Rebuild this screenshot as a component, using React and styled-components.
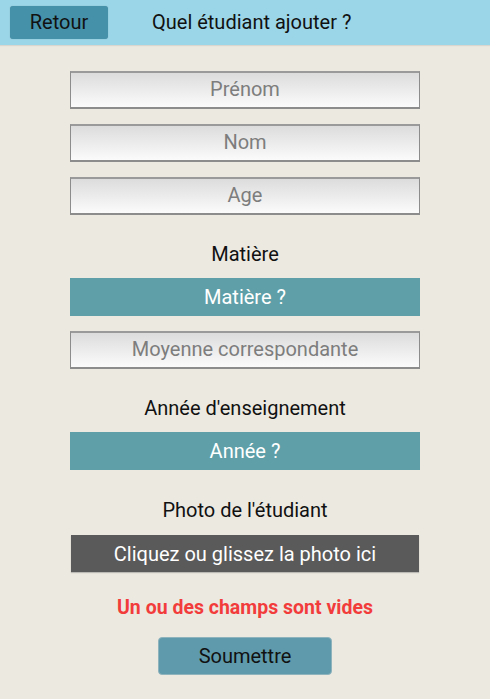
import styled, { createGlobalStyle } from "styled-components";

const Global = createGlobalStyle`
  html, body {
    margin: 0;
    padding: 0;
    background: #ece9e1;
    font-family: Roboto, "Liberation Sans", sans-serif;
  }
`;

export default function App() {
  return (
    <>
      <Global />
      <Page>
        <Header>
          <BackButton>Retour</BackButton>
          <Title>Quel étudiant ajouter ?</Title>
        </Header>
        <Form>
          <Field placeholder="Prénom" $mt={26} />
          <Field placeholder="Nom" $mt={15} />
          <Field placeholder="Age" $mt={15} />
          <Label $mt={28}>Matière</Label>
          <Select $mt={12}>Matière ?</Select>
          <Field placeholder="Moyenne correspondante" $mt={15} />
          <Label $mt={28}>Année d'enseignement</Label>
          <Select $mt={12}>Année ?</Select>
          <Label $mt={29}>Photo de l'étudiant</Label>
          <Dropzone>Cliquez ou glissez la photo ici</Dropzone>
          <Error>Un ou des champs sont vides</Error>
          <Submit>Soumettre</Submit>
        </Form>
      </Page>
    </>
  );
}

const Page = styled.div`
  width: 490px;
  min-height: 699px;
  background: #ece9e1;
`;

const Header = styled.div`
  height: 45px;
  background: #9bd6e8;
  display: flex;
  align-items: center;
  padding-left: 10px;
  box-sizing: border-box;
  box-shadow: 0 1px 1px rgba(0, 0, 0, 0.08);
`;

const BackButton = styled.button`
  width: 98px;
  height: 33px;
  margin-top: -1px;
  border: none;
  border-radius: 3px;
  background: #4591aa;
  color: #111;
  font-family: Roboto, sans-serif;
  font-size: 20px;
  box-shadow: 0 0 1px rgba(0, 0, 0, 0.3);
  padding: 0;
`;

const Title = styled.div`
  margin-left: 44px;
  margin-top: -1px;
  font-size: 20px;
  color: #111;
`;

const Form = styled.div`
  display: flex;
  flex-direction: column;
  align-items: center;
`;

const Field = styled.input`
  width: 350px;
  height: 38px;
  box-sizing: border-box;
  margin-top: ${(p) => p.$mt}px;
  border: 1px solid #8c8c8c;
  border-top: 2px solid #9a9a9a;
  border-bottom: 2px solid #8c8c8c;
  background: linear-gradient(#dcdcdc, #fbfbfb);
  text-align: center;
  font-family: Roboto, sans-serif;
  font-size: 20px;
  color: #333;
  outline: none;
  padding: 0 0 2px;
  &::placeholder {
    color: #7d7d7d;
  }
`;

const Label = styled.div`
  margin-top: ${(p) => p.$mt}px;
  height: 23px;
  line-height: 23px;
  font-size: 20px;
  color: #111;
`;

const Select = styled.div`
  width: 350px;
  height: 38px;
  margin-top: ${(p) => p.$mt}px;
  background: #5e9fa8;
  color: #fff;
  display: flex;
  align-items: center;
  justify-content: center;
  font-size: 20px;
`;

const Dropzone = styled.div`
  width: 348px;
  height: 37px;
  margin-top: 13px;
  background: #5a5a5a;
  color: #fff;
  display: flex;
  align-items: center;
  justify-content: center;
  font-size: 20px;
  box-shadow: 0 1px 1px rgba(0, 0, 0, 0.2);
`;

const Error = styled.div`
  margin-top: 24px;
  height: 23px;
  line-height: 23px;
  font-size: 19.5px;
  font-weight: 700;
  color: #f23c3c;
`;

const Submit = styled.button`
  width: 174px;
  height: 38px;
  margin-top: 18px;
  border: 1px solid #8fb3bd;
  border-radius: 4px;
  background: #5e9aab;
  color: #111;
  font-family: Roboto, sans-serif;
  font-size: 20px;
  padding: 0;
`;
